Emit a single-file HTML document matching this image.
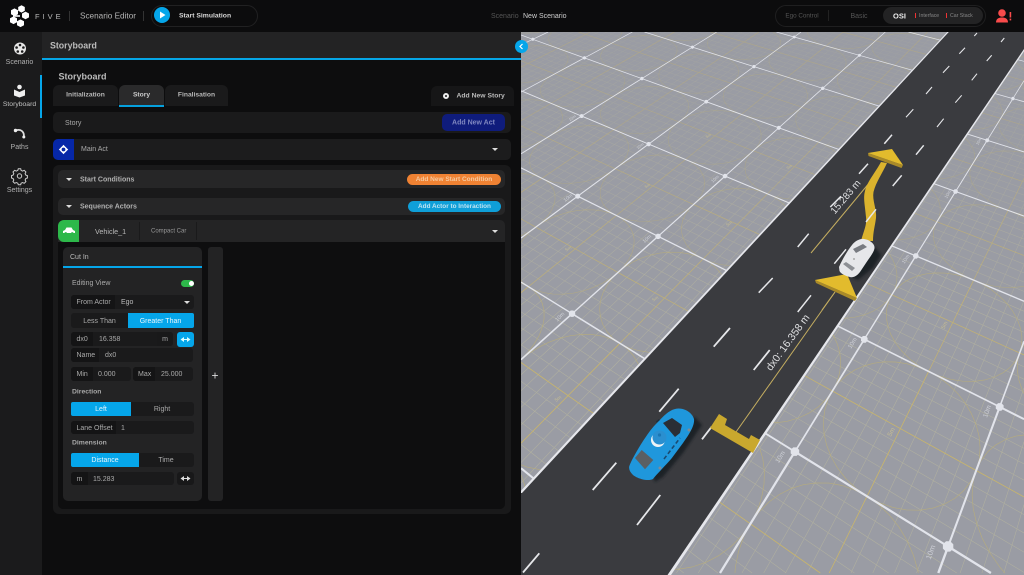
<!DOCTYPE html>
<html><head><meta charset="utf-8"><title>Scenario Editor</title>
<style>
html,body{margin:0;padding:0;background:#0c0c0d;width:1024px;height:575px;overflow:hidden;font-family:"Liberation Sans",sans-serif;color:#bdbdbd}
#w{position:absolute;left:0;top:0;width:1024px;height:575px;overflow:hidden;filter:blur(.3px)}
.a{position:absolute}
.t{position:absolute;white-space:nowrap;transform:translateY(calc(-50% + .6px));line-height:1;font-size:7px}
.m{transform:translate(-50%,calc(-50% + .6px))}
.b{font-weight:bold;transform:translateY(calc(-50% + 1.1px))}
.b.m{transform:translate(-50%,calc(-50% + 1.1px))}
.c{position:absolute;width:0;height:0;border-left:3px solid transparent;border-right:3px solid transparent;border-top:3.5px solid #ddd}
.f{background:#1a1a1b;border-radius:3px}
.l{background:#141415;border-radius:3px 0 0 3px}
</style></head><body><div id="w">
<!-- top bar -->
<div class="a" style="left:0;top:0;width:1024px;height:32px;background:#0c0c0d"></div>
<svg class="a" style="left:0;top:0" width="34" height="32" fill="#fff">
<polygon points="21.5,5.2 24.8,7 24.8,10.8 21.5,12.6 18.2,10.8 18.2,7"/>
<polygon points="14.5,8.4 18,10.3 18,14.2 14.5,16.1 11,14.2 11,10.3"/>
<polygon points="25.5,11.6 29,13.5 29,17.4 25.5,19.3 22,17.4 22,13.5"/>
<polygon points="13.5,16.4 17,18.3 17,22.2 13.5,24.1 10,22.2 10,18.3"/>
<polygon points="20.5,19.4 24,21.3 24,25.2 20.5,27.1 17,25.2 17,21.3"/>
<rect x="13" y="15.2" width="7" height="1.6"/>
</svg>
<div class="t" style="left:35px;top:15.5px;font-size:7.5px;letter-spacing:3px;color:#b8b8b8">FIVE</div>
<div class="a" style="left:69px;top:11px;width:1px;height:10px;background:#333"></div>
<div class="t" style="left:80px;top:15.5px;font-size:8.2px;color:#b5b5b5">Scenario Editor</div>
<div class="a" style="left:143px;top:11px;width:1px;height:10px;background:#333"></div>
<div class="a" style="left:151px;top:5px;width:105px;height:20px;border:1px solid #212122;border-radius:11px"></div>
<div class="a" style="left:154px;top:7px;width:16px;height:16px;border-radius:50%;background:#05a6ea"></div>
<svg class="a" style="left:154px;top:7px" width="16" height="16"><polygon points="6,4.5 6,11.5 11.5,8" fill="#fff"/></svg>
<div class="t b" style="left:179px;top:15.5px;color:#d8d8d8;font-size:6.8px">Start Simulation</div>
<div class="t" style="left:491px;top:15.5px;color:#555">Scenario</div>
<div class="t" style="left:523px;top:15.5px;color:#cfcfcf">New Scenario</div>
<div class="a" style="left:775px;top:5px;width:209px;height:20px;border:1px solid #1f1f20;border-radius:11px"></div>
<div class="t m" style="left:802px;top:15.5px;color:#555;font-size:6.3px">Ego Control</div>
<div class="a" style="left:828px;top:10px;width:1px;height:11px;background:#222"></div>
<div class="t m" style="left:859px;top:15.5px;color:#555">Basic</div>
<div class="a" style="left:883px;top:7px;width:100px;height:17px;background:#232324;border-radius:9px"></div>
<div class="t b" style="left:893px;top:15px;color:#eee;font-size:7.5px">OSI</div>
<div class="a" style="left:915px;top:13px;width:1px;height:5px;background:#e33"></div>
<div class="t" style="left:919px;top:15.5px;color:#888;font-size:5.2px">Interface</div>
<div class="a" style="left:946px;top:13px;width:1px;height:5px;background:#e33"></div>
<div class="t" style="left:950px;top:15.5px;color:#888;font-size:5.2px">Car Stack</div>
<svg class="a" style="left:994px;top:8px" width="18" height="16" fill="#f94b4b"><circle cx="8" cy="5" r="3.8"/><path d="M2 14.5 C2 10.5 5 9.5 8 9.5 C11 9.5 14 10.5 14 14.5Z"/><rect x="15.6" y="4" width="1.6" height="5.5"/><rect x="15.6" y="10.6" width="1.6" height="1.8"/></svg>

<!-- sidebar -->
<div class="a" style="left:0;top:32px;width:42px;height:543px;background:#1b1b1c"></div>
<div class="a" style="left:40px;top:75px;width:2px;height:43px;background:#05a6ea"></div>
<svg class="a" style="left:0;top:32px" width="42" height="160">
<circle cx="20" cy="16.5" r="6" fill="#e8e8e8"/><g fill="#1b1b1c"><circle cx="20" cy="13" r="1.3"/><circle cx="23.4" cy="15.5" r="1.3"/><circle cx="22.2" cy="19.5" r="1.3"/><circle cx="17.8" cy="19.5" r="1.3"/><circle cx="16.6" cy="15.5" r="1.3"/></g>
<circle cx="19.5" cy="55" r="2.3" fill="#eee"/><path d="M14 57.5 L19.5 60 L25 57.5 V63.5 L19.5 65.5 L14 63.5Z" fill="#eee"/>
<path d="M16 98.5 C21 96.5 24.5 100 23.8 105" fill="none" stroke="#ddd" stroke-width="1.8"/><circle cx="15.5" cy="98.5" r="1.7" fill="#eee"/><circle cx="23.8" cy="105" r="1.5" fill="#eee"/>
<circle cx="19.5" cy="144" r="2.2" fill="none" stroke="#ccc" stroke-width="1"/><path d="M18.3 137.7 h2.4 l.4 1.7 1.5.7 1.6-.8 1.7 1.7 -.8 1.6 .7 1.5 1.6.5 v2.4 l-1.6.5 -.7 1.5 .8 1.6 -1.7 1.7 -1.6-.8 -1.5.7 -.4 1.6 h-2.4 l-.5-1.6 -1.5-.7 -1.6.8 -1.7-1.7 .8-1.6 -.7-1.5 -1.6-.5 v-2.4 l1.6-.5 .7-1.5 -.8-1.6 1.7-1.7 1.6.8 1.5-.7z" fill="none" stroke="#ccc" stroke-width="1" transform="translate(0,-1)"/>
</svg>
<div class="t m" style="left:19.5px;top:61.5px;color:#b0b0b0">Scenario</div>
<div class="t m" style="left:19.5px;top:104.5px;color:#c0c0c0;font-size:6.8px">Storyboard</div>
<div class="t m" style="left:19.5px;top:146.5px;color:#b0b0b0">Paths</div>
<div class="t m" style="left:19.5px;top:189.5px;color:#b0b0b0">Settings</div>

<!-- panel header -->
<div class="a" style="left:42px;top:32px;width:479px;height:27px;background:#232324"></div>
<div class="a" style="left:42px;top:60px;width:479px;height:515px;background:#0d0d0e"></div>
<div class="a" style="left:42px;top:58px;width:479px;height:2px;background:#05a6e6"></div>
<div class="t b" style="left:50px;top:45px;font-size:8.8px;color:#bcbcbc">Storyboard</div>
<div class="t b" style="left:58.5px;top:76px;font-size:9px;color:#bbb">Storyboard</div>

<!-- tabs -->
<div class="a" style="left:53px;top:85px;width:65px;height:21px;background:#1a1a1b;border-radius:6px 6px 0 0"></div>
<div class="a" style="left:119px;top:85px;width:45px;height:20px;background:#2a2a2b;border-radius:6px 6px 0 0;border-bottom:2px solid #05a0dd"></div>
<div class="a" style="left:165px;top:85px;width:63px;height:21px;background:#1a1a1b;border-radius:6px 6px 0 0"></div>
<div class="t b m" style="left:85.5px;top:95px;color:#b8b8b8;font-size:6.7px">Initialization</div>
<div class="t b m" style="left:141.5px;top:94.5px;color:#ccc;font-size:6.7px">Story</div>
<div class="t b m" style="left:196.5px;top:95px;color:#b8b8b8;font-size:6.7px">Finalisation</div>
<div class="a" style="left:431px;top:86px;width:83px;height:20px;background:#161617;border-radius:6px 6px 0 0"></div>
<div class="a" style="left:442.5px;top:92.5px;width:2.6px;height:2.6px;border:2.6px solid #eee;border-radius:50%;background:#161617"></div>
<div class="t b" style="left:456.5px;top:95.5px;color:#bbb;font-size:6.8px">Add New Story</div>

<!-- story row -->
<div class="a" style="left:53px;top:112px;width:458px;height:21px;background:#1a1a1b;border-radius:5px"></div>
<div class="t" style="left:65px;top:122.5px;color:#aaa">Story</div>
<div class="a" style="left:442px;top:114px;width:63px;height:17px;background:#0f1c7c;border-radius:5px"></div>
<div class="t b m" style="left:473.5px;top:122px;color:#8088c0">Add New Act</div>

<!-- main act -->
<div class="a" style="left:53px;top:139px;width:458px;height:21px;background:#1c1c1d;border-radius:5px"></div>
<div class="a" style="left:53px;top:139px;width:21px;height:21px;background:#0627a8;border-radius:5px 0 0 5px"></div>
<svg class="a" style="left:53px;top:139px" width="21" height="21"><circle cx="10.5" cy="10.5" r="2.6" fill="none" stroke="#fff" stroke-width="1.4"/><path d="M10.5 5.8 L12.5 8 H8.5Z M10.5 15.2 L12.5 13 H8.5Z M5.8 10.5 L8 8.5 V12.5Z M15.2 10.5 L13 8.5 V12.5Z" fill="#fff"/></svg>
<div class="t" style="left:81px;top:149px;color:#aaa">Main Act</div>
<div class="c" style="left:492px;top:147.5px"></div>

<!-- section -->
<div class="a" style="left:53px;top:165px;width:458px;height:349px;background:#19191a;border-radius:6px"></div>
<div class="a" style="left:58px;top:170px;width:447px;height:18px;background:#262627;border-radius:5px"></div>
<div class="c" style="left:66px;top:177.5px"></div>
<div class="t b" style="left:80px;top:178.5px;color:#b0b0b0">Start Conditions</div>
<div class="a" style="left:407px;top:174px;width:94px;height:10.5px;background:#ef8233;border-radius:5.5px"></div>
<div class="t b m" style="left:454px;top:178.5px;color:#f5c9a0;font-size:6.5px">Add New Start Condition</div>
<div class="a" style="left:58px;top:198px;width:447px;height:17px;background:#262627;border-radius:5px"></div>
<div class="c" style="left:66px;top:205px"></div>
<div class="t b" style="left:80px;top:206px;color:#b0b0b0">Sequence Actors</div>
<div class="a" style="left:408px;top:201px;width:93px;height:11px;background:#0f9fd8;border-radius:5.5px"></div>
<div class="t b m" style="left:454.5px;top:206px;color:#bfe4f3;font-size:6.4px">Add Actor to Interaction</div>

<!-- vehicle row -->
<div class="a" style="left:58px;top:220px;width:447px;height:22px;background:#242425;border-radius:6px 5px 0 0"></div>
<div class="a" style="left:58px;top:220px;width:21px;height:22px;background:#2db84a;border-radius:6px 0 0 6px"></div>
<svg class="a" style="left:62px;top:225px" width="14" height="12" fill="#fff"><path d="M1 8 V6 L3 5 L4.5 2.5 H9.5 L11 5 L13 6 V8Z"/><circle cx="3.7" cy="8.4" r="1.3" fill="#2db84a"/><circle cx="10.3" cy="8.4" r="1.3" fill="#2db84a"/></svg>
<div class="t" style="left:95px;top:231px;color:#b8b8b8;font-size:7.2px">Vehicle_1</div>
<div class="a" style="left:139px;top:222px;width:1px;height:18px;background:#1a1a1b"></div>
<div class="t" style="left:151px;top:231px;color:#999;font-size:6px">Compact Car</div>
<div class="a" style="left:196px;top:222px;width:1px;height:18px;background:#1a1a1b"></div>
<div class="c" style="left:492px;top:229.5px"></div>
<div class="a" style="left:58px;top:242px;width:447px;height:267px;background:#0e0e0f;border-radius:0 0 5px 5px"></div>

<!-- cut-in card -->
<div class="a" style="left:63px;top:247px;width:139px;height:254px;background:#232324;border-radius:5px"></div>
<div class="a" style="left:63px;top:265.5px;width:139px;height:2.5px;background:#05a6ea"></div>
<div class="t" style="left:70px;top:256.5px;color:#bbb">Cut In</div>
<div class="a" style="left:208px;top:247px;width:15px;height:254px;background:#232324;border-radius:3px"></div>
<div class="t m" style="left:215px;top:374.5px;color:#ddd;font-size:12px">+</div>

<div class="t" style="left:72px;top:283px;color:#aaa">Editing View</div>
<div class="a" style="left:181px;top:280px;width:13px;height:7px;background:#2db84a;border-radius:4px"></div>
<div class="a" style="left:188.5px;top:281px;width:5px;height:5px;background:#fff;border-radius:50%"></div>

<div class="a f" style="left:71px;top:295px;width:123px;height:14px"></div>
<div class="a l" style="left:71px;top:295px;width:44px;height:14px"></div>
<div class="t" style="left:76.5px;top:302px;color:#aaa">From Actor</div>
<div class="t" style="left:121px;top:302px;color:#bbb">Ego</div>
<div class="c" style="left:184px;top:301px"></div>

<div class="a f" style="left:71px;top:313px;width:123px;height:15px"></div>
<div class="a" style="left:128px;top:313px;width:66px;height:15px;background:#05a6ea;border-radius:0 2px 2px 0"></div>
<div class="t m" style="left:99.5px;top:320.5px;color:#aaa">Less Than</div>
<div class="t m" style="left:160.5px;top:320.5px;color:#e8f6fc">Greater Than</div>

<div class="a f" style="left:71px;top:332px;width:102px;height:14px"></div>
<div class="a l" style="left:71px;top:332px;width:22px;height:14px"></div>
<div class="a" style="left:157px;top:332px;width:16px;height:14px;background:#19191a;border-radius:0 3px 3px 0"></div>
<div class="t" style="left:76.5px;top:339px;color:#aaa">dx0</div>
<div class="t" style="left:99px;top:339px;color:#aaa">16.358</div>
<div class="t m" style="left:165px;top:339px;color:#aaa">m</div>
<div class="a" style="left:177px;top:332px;width:17px;height:15px;background:#05a6ea;border-radius:3px"></div>
<svg class="a" style="left:177px;top:332px" width="17" height="15" fill="#dff"><path d="M3.5 7.5 L7 5 V10Z M13.5 7.5 L10 5 V10Z"/><rect x="6" y="7" width="5" height="1"/></svg>

<div class="a f" style="left:71px;top:348px;width:122px;height:14px"></div>
<div class="a l" style="left:71px;top:348px;width:28px;height:14px"></div>
<div class="t" style="left:76.5px;top:355px;color:#aaa">Name</div>
<div class="t" style="left:105px;top:355px;color:#aaa">dx0</div>

<div class="a f" style="left:71px;top:367px;width:60px;height:14px"></div>
<div class="a l" style="left:71px;top:367px;width:22px;height:14px"></div>
<div class="t" style="left:76.5px;top:374px;color:#aaa">Min</div>
<div class="t" style="left:98px;top:374px;color:#aaa">0.000</div>
<div class="a f" style="left:133px;top:367px;width:60px;height:14px"></div>
<div class="a l" style="left:133px;top:367px;width:22px;height:14px"></div>
<div class="t" style="left:138px;top:374px;color:#aaa">Max</div>
<div class="t" style="left:161px;top:374px;color:#aaa">25.000</div>

<div class="t b" style="left:72px;top:392px;color:#a8a8a8;font-size:6.8px">Direction</div>
<div class="a f" style="left:71px;top:402px;width:123px;height:14px"></div>
<div class="a" style="left:71px;top:402px;width:60px;height:14px;background:#05a6ea;border-radius:2px 0 0 2px"></div>
<div class="t m" style="left:101px;top:409px;color:#e8f6fc">Left</div>
<div class="t m" style="left:162px;top:409px;color:#aaa">Right</div>

<div class="a f" style="left:71px;top:421px;width:123px;height:13px"></div>
<div class="a l" style="left:71px;top:421px;width:45px;height:13px"></div>
<div class="t" style="left:76.5px;top:427.5px;color:#aaa">Lane Offset</div>
<div class="t" style="left:121px;top:427.5px;color:#aaa">1</div>

<div class="t b" style="left:72px;top:443px;color:#a8a8a8;font-size:6.8px">Dimension</div>
<div class="a f" style="left:71px;top:453px;width:123px;height:14px"></div>
<div class="a" style="left:71px;top:453px;width:68px;height:14px;background:#05a6ea;border-radius:2px 0 0 2px"></div>
<div class="t m" style="left:105px;top:460px;color:#e8f6fc">Distance</div>
<div class="t m" style="left:166px;top:460px;color:#aaa">Time</div>

<div class="a f" style="left:71px;top:472px;width:103px;height:13px"></div>
<div class="a l" style="left:71px;top:472px;width:17px;height:13px"></div>
<div class="t" style="left:76.5px;top:478.5px;color:#aaa">m</div>
<div class="t" style="left:93px;top:478.5px;color:#aaa">15.283</div>
<div class="a" style="left:177px;top:472px;width:17px;height:13px;background:#181819;border-radius:3px"></div>
<svg class="a" style="left:177px;top:471px" width="17" height="15" fill="#ddd"><path d="M3.5 7.5 L7 5 V10Z M13.5 7.5 L10 5 V10Z"/><rect x="6" y="7" width="5" height="1"/></svg>

<!-- 3D scene -->
<svg id="scene" class="a" style="left:521px;top:32px" width="503" height="543" viewBox="521 32 503 543" xmlns="http://www.w3.org/2000/svg">
<defs><filter id="sh" x="-30%" y="-30%" width="160%" height="160%"><feGaussianBlur stdDeviation="1.2"/></filter></defs>
<rect x="521" y="32" width="503" height="543" fill="#9a9ca4"/>
<g id="grid"></g>
<g font-family="Liberation Sans, sans-serif" font-size="5" fill="#dcdee4" text-anchor="middle" opacity=".8">
<text transform="translate(933,553) rotate(-70)" font-size="7.5">10m</text>
<text transform="translate(989,412) rotate(-70)" font-size="6.5">10m</text>
<text transform="translate(782,458) rotate(-58)" font-size="6.5">10m</text>
<text transform="translate(854,344) rotate(-58)" font-size="6">10m</text>
<text transform="translate(561,318) rotate(-45)" font-size="5.5">10m</text>
<text transform="translate(648,240) rotate(-42)">10m</text>
<text transform="translate(569,199) rotate(-38)">10m</text>
<text transform="translate(641,147) rotate(-38)" font-size="4">10m</text>
<text transform="translate(716,180) rotate(-42)" font-size="4.5">10m</text>
<text transform="translate(573,119) rotate(-35)" font-size="4">10m</text>
<text transform="translate(907,260) rotate(-55)">10m</text>
<text transform="translate(949,195) rotate(-60)" font-size="4.5">10m</text>
<text transform="translate(980,142) rotate(-60)" font-size="4">10m</text>
<g fill="#cfc48f">
<text transform="translate(893,433) rotate(-62)" font-size="6.5">5m</text>
<text transform="translate(946,326) rotate(-62)" font-size="5.5">5m</text>
<text transform="translate(559,400) rotate(-35)">5m</text>
<text transform="translate(569,250) rotate(-30)" font-size="4.5">5m</text>
<text transform="translate(656,300) rotate(-30)" font-size="4.5">5m</text>
<text transform="translate(730,225) rotate(-35)" font-size="4.5">5m</text>
<text transform="translate(648,187) rotate(-30)" font-size="4">5m</text>
<text transform="translate(790,168) rotate(-35)" font-size="4">5m</text>
<text transform="translate(709,137) rotate(-30)" font-size="4">5m</text>
</g>
</g>

<polygon points="948,32 1024,32 1024,50 669,575 521,575 521,492" fill="#3a3b3f"/>
<polygon points="947.2,32 948.8,32 522,493 521,493 521,490.7" fill="#e6e7ec"/>
<polygon points="1024,49 1024,51.2 671,575 667.5,575" fill="#e6e7ec"/>

<g stroke="#e6e7ea" stroke-width="1.1" fill="none">
<path d="M974.3 36L977 33M959.3 53.7L965 47.7M943 72.7L949.3 66M926 94L932 87M906 117.3L913.3 109.3M1001 42L1004.3 38M986.7 61L991.7 55.3M971.7 80.3L977 73.7M955.3 102.7L961.7 95.3M937 127L943.7 118.7"/>
</g>
<g stroke="#e6e7ea" stroke-width="1.5" fill="none">
<path d="M884.3 143.7L892 134.7M859 173.7L868 163.7M830.3 207L841 196.3M797.7 247L808.7 233.7M758.7 292.7L772.7 278M916 154.7L923.7 145.3M892.7 186L901.7 175.3M834.3 263.7L846 249.3M797.7 312L811 295.3"/>
</g>
<g stroke="#e6e7ea" stroke-width="1.8" fill="none">
<path d="M713.7 346.7L730 328M659.3 411.7L678.7 388.7M592.7 490L616.3 462.7M523 572.5L539.3 553.3M753.7 370L769.7 350M702 439.3L711.7 426.7M637 525L660.3 495"/>
</g>

<!-- measure lines -->
<path d="M811 253L870 182M736 432L835 292" stroke="#c4ad60" stroke-width="1" fill="none"/>
<text transform="translate(848,199) rotate(-50)" text-anchor="middle" font-family="Liberation Sans, sans-serif" font-size="9.8" fill="#dfe0e2">15.283 m</text>
<text transform="translate(790.5,344.5) rotate(-54)" text-anchor="middle" font-family="Liberation Sans, sans-serif" font-size="10.5" fill="#dfe0e2">dx0: 16.358 m</text>

<!-- curve -->
<path d="M861 241 C864 230 867 225 866 217 C865 205 863 198 865 191 C867 182 875 173 881 162 L887 163 C882 174 876 182 873.5 192 C872 200 877 210 876 218 C875 226 873 232 873 241 Z" fill="#dbb32d"/>
<path d="M866 222L876 209.3" stroke="#e6e7ea" stroke-width="1.5"/>
<!-- top arrow -->
<polygon points="868,153 868.5,156 901.5,168 903,165" fill="#a98a28"/>
<polygon points="868,153 892,149 903,165" fill="#e2bb2d"/>
<!-- bottom arrow -->
<polygon points="815,280 816,283 855,301 857,298" fill="#a98a28"/>
<polygon points="815,280 847,274 857,298" fill="#e2bb2d"/>
<path d="M822 310L835 292" stroke="#c4ad60" stroke-width="1" fill="none"/>
<!-- bracket -->
<polygon points="710,428 719,414 727,419 725,425 749,439 751,435 760,440 753,453" fill="#c9a82e"/>

<!-- white car -->
<polygon points="875,247 881,255 873,268 858,280 850,277" fill="#1f2126" filter="url(#sh)"/>
<path d="M839 267 C843 258 848 250 852 245 C855 241 860 238.5 864 239 C869 239.5 874 243 874.5 247 C875 251 870 257 866 263 L860 272 C857 276 853 278 850 277 C846 276 841 274 839.5 271 Z" fill="#e6e7ea"/>
<polygon points="853,249 863,244 867,247 856,253" fill="#777a80"/>
<polygon points="843,264 846,262 855,268 852,271" fill="#8d9095"/>
<circle cx="854" cy="259" r="1" fill="#aaa"/>

<!-- blue car -->
<polygon points="695,417 702,425 683,453 663,477 655,482 650,470 680,425" fill="#1f2126" filter="url(#sh)"/>
<path d="M629.3 466 C633 456 648 432 655 425 C661 419 667 411 675 409 C683 407 692 412 694 419 C695 426 688 436 683 443 L671.7 458.3 C666 465 657 474 653 479 C648 481.5 638 479 633 475 C630 472 628.5 469 629.3 466Z" fill="#1f97dc"/>
<polygon points="663,423 672,418 682,425 680,433 675,437" fill="#2a2e35"/>
<polygon points="635,458 641.7,450 653.3,460 645,469.3" fill="#5a5f63"/>
<circle cx="658" cy="440" r="7" fill="#eef3f6"/>
<circle cx="659.5" cy="437.5" r="7" fill="#2a8fd0"/>
<path d="M664 459 L680 438" stroke="#1a4a70" stroke-width="1.6" stroke-dasharray="4 2.5" fill="none"/>
<circle cx="659.5" cy="435" r="1.6" fill="#1a76b3"/>
<rect x="656" y="420" width="4" height="1.5" transform="rotate(-40 658 421)" fill="#22303c"/>
<circle cx="689" cy="430" r="1.5" fill="#7f8a94"/><circle cx="660" cy="468" r="1.5" fill="#7f8a94"/>
</svg>

<!-- collapse btn -->
<div class="a" style="left:514.5px;top:39.5px;width:13px;height:13px;background:#05a6ea;border-radius:50%"></div>
<svg class="a" style="left:514.5px;top:39.5px" width="13" height="13"><path d="M7.5 4 L5 6.5 L7.5 9" stroke="#fff" stroke-width="1.2" fill="none"/></svg>
</div>
<script>
(function(){
var P=[[0,3,572,314],[0,2,658,236],[0,1,725,176],[0,0,779,128],[0,-1,823,89],[0,-2,859,55],
[1,2,578,196],[1,1,648,145],[1,0,706,102],[1,-1,754,66],[1,-2,794,37],
[2,1,581,116],[2,0,642,79],[2,-1,693,47],[3,1,523,91],[3,0,584,58],[4,0,533,39],
[-2,3,795,452],[-2,2,864,339],[-2,1,916,256],[-2,0,956,191],[-2,-1,987,140],[-2,-2,1013,99],
[-3,3,948,546],[-3,2,1000,407]];
var N=8,A=[],i,j,k;
for(i=0;i<N;i++){A[i]=[];for(j=0;j<=N;j++)A[i][j]=0;}
function add(r,v){for(var a=0;a<N;a++){for(var b=0;b<N;b++)A[a][b]+=r[a]*r[b];A[a][N]+=r[a]*v;}}
P.forEach(function(p){var u=p[0],v=p[1],x=p[2]/1000,y=p[3]/1000;
add([u,v,1,0,0,0,-u*x,-v*x],x);add([0,0,0,u,v,1,-u*y,-v*y],y);});
for(i=0;i<N;i++){var m=i;for(k=i+1;k<N;k++)if(Math.abs(A[k][i])>Math.abs(A[m][i]))m=k;
var t=A[i];A[i]=A[m];A[m]=t;
for(k=0;k<N;k++)if(k!=i){var f=A[k][i]/A[i][i];for(j=i;j<=N;j++)A[k][j]-=f*A[i][j];}}
var h=[];for(i=0;i<N;i++)h[i]=A[i][N]/A[i][i];
function H(u,v){var w=h[6]*u+h[7]*v+1;if(w<=.03)return null;return [1000*(h[0]*u+h[1]*v+h[2])/w,1000*(h[3]*u+h[4]*v+h[5])/w];}
function f1(n){return n.toFixed(1);}
var X0=521,X1=1024,Y0=32,Y1=573;
function clip(a,b){var t0=0,t1=1,dx=b[0]-a[0],dy=b[1]-a[1],ps=[-dx,dx,-dy,dy],qs=[a[0]-X0,X1-a[0],a[1]-Y0,Y1-a[1]];
 for(var n=0;n<4;n++){if(ps[n]==0){if(qs[n]<0)return null;}else{var r=qs[n]/ps[n];if(ps[n]<0){if(r>t1)return null;if(r>t0)t0=r;}else{if(r<t0)return null;if(r<t1)t1=r;}}}
 return [[a[0]+t0*dx,a[1]+t0*dy],[a[0]+t1*dx,a[1]+t1*dy]];}
function ln(a,b){if(!a||!b)return '';var c=clip(a,b);if(!c)return '';return 'M'+f1(c[0][0])+' '+f1(c[0][1])+'L'+f1(c[1][0])+' '+f1(c[1][1]);}
function seg(u1,v1,u2,v2){return ln(H(u1,v1),H(u2,v2));}
function scale(u,v){var p=H(u,v),r=H(u+1,v),s=H(u,v+1);if(!p||!r||!s)return 0;return Math.sqrt(Math.hypot(r[0]-p[0],r[1]-p[1])*Math.hypot(s[0]-p[0],s[1]-p[1]));}
function clamp(x,a,b){return Math.max(a,Math.min(b,x));}
function put(map,op,d){if(!d)return;var key=(Math.round(op*20)/20).toFixed(2);(map[key]=map[key]||[]).push(d);}
var minor={},mid={},circ={},major='',nodes='';
var UA=-5,UB=7,VA=-5,VB=5,q,v,u,z;
for(q=UA*10;q<=UB*10;q++){if(q%10==0)continue;
 for(v=VA;v<VB;v++){z=scale(Math.floor(q/10),v);if(!z)continue;var s=seg(q/10,v,q/10,v+1);
  if(q%5==0)put(mid,clamp((z-30)/110,.35,1),s);else put(minor,clamp((z-30)/110,.15,.85),s);}}
for(q=VA*10;q<=VB*10;q++){if(q%10==0)continue;
 for(u=UA;u<UB;u++){z=scale(u,Math.floor(q/10));if(!z)continue;var s2=seg(u,q/10,u+1,q/10);
  if(q%5==0)put(mid,clamp((z-30)/110,.35,1),s2);else put(minor,clamp((z-30)/110,.15,.85),s2);}}
for(i=UA;i<UB;i++)for(j=VA;j<VB;j++){z=scale(i,j);if(!z)continue;var d='',prev=null;for(k=0;k<=40;k++){var an=k/40*2*Math.PI,pt=H(i+.5+.5*Math.cos(an),j+.5+.5*Math.sin(an));if(prev&&pt)d+=ln(prev,pt);prev=pt;}put(circ,clamp((z-30)/100,.4,.95),d);}
for(i=UA;i<=UB;i++)for(j=VA;j<VB;j++){z=scale(i,j+.5);if(!z)continue;var ms=seg(i,j,i,j+1);if(ms)major+='<path d="'+ms+'" stroke-width="'+clamp(z*.012,.7,2.4).toFixed(2)+'"/>';}
for(j=VA;j<=VB;j++)for(i=UA;i<UB;i++){z=scale(i+.5,j);if(!z)continue;var ms2=seg(i,j,i+1,j);if(ms2)major+='<path d="'+ms2+'" stroke-width="'+clamp(z*.012,.7,2.4).toFixed(2)+'"/>';}
for(i=UA;i<=UB;i++)for(j=VA;j<=VB;j++){var n=H(i,j);z=scale(i,j);if(!n||!z)continue;var r=Math.max(1.3,z*.028);if(n[0]-r<521||n[0]+r>1024||n[1]-r<32||n[1]+r>573)continue;
nodes+='<polygon points="'+[0,1,2,3,4,5,6,7].map(function(e){var an=(e+.5)*Math.PI/4;return f1(n[0]+r*Math.cos(an))+','+f1(n[1]+r*Math.sin(an));}).join(' ')+'"/>';}
function out(map,stroke,w){var o='';for(var key in map)o+='<path d="'+map[key].join('')+'" fill="none" stroke="'+stroke+'" stroke-width="'+w+'" opacity="'+key+'"/>';return o;}
document.getElementById('grid').innerHTML=
out(minor,'#b5b49f',.55)+out(circ,'#b6ac7c',.65)+out(mid,'#c9b56a',.8)+
'<g fill="none" stroke="#e2e4eb">'+major+'</g>'+
'<g fill="#e2e4eb">'+nodes+'</g>';
})();
</script>
</body></html>
